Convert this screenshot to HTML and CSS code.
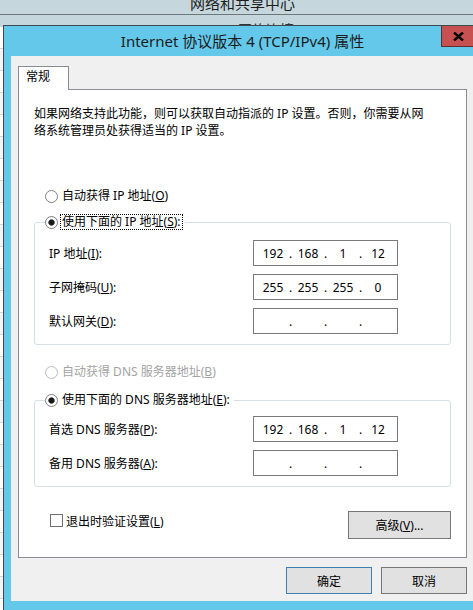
FILE: index.html
```html
<!DOCTYPE html>
<html lang="zh-CN">
<head>
<meta charset="utf-8">
<title>Internet 协议版本 4 (TCP/IPv4) 属性</title>
<link rel="stylesheet" href="styles.css">
</head>
<body>
<div class="desktop">
  <div class="bgwin">
    <div class="bg-title"><span>网络和共享中心</span></div>
    <div class="bg-crumb"><span>网络连接</span></div>
    <div class="bg-list">
      <div class="bg-row"></div><div class="bg-row alt"></div><div class="bg-row"></div><div class="bg-row alt"></div>
      <div class="bg-row"></div><div class="bg-row alt"></div><div class="bg-row"></div><div class="bg-row alt"></div>
      <div class="bg-row"></div><div class="bg-row alt"></div><div class="bg-row"></div><div class="bg-row alt"></div>
      <div class="bg-row"></div><div class="bg-row alt"></div><div class="bg-row"></div><div class="bg-row alt"></div>
      <div class="bg-row"></div><div class="bg-row alt"></div><div class="bg-row"></div><div class="bg-row alt"></div>
      <div class="bg-row"></div><div class="bg-row alt"></div><div class="bg-row"></div><div class="bg-row alt"></div>
      <div class="bg-row"></div><div class="bg-row alt"></div><div class="bg-row"></div>
    </div>
  </div>

  <div class="dialog">
    <div class="titlebar">
      <span class="title">Internet 协议版本 4 (TCP/IPv4) 属性</span>
      <div class="close">
        <svg width="11" height="9" viewBox="0 0 11 9"><path d="M1 0.5 L10 8.5 M10 0.5 L1 8.5" stroke="#000" stroke-width="2.4" fill="none"/></svg>
      </div>
    </div>
    <div class="client">
      <div class="tabs"><div class="tab">常规</div></div>
      <div class="panel">
        <p class="desc">如果网络支持此功能，则可以获取自动指派的 IP 设置。否则，你需要从网<br>络系统管理员处获得适当的 IP 设置。</p>

        <div class="opt first"><span class="radio"></span><span class="lbl">自动获得 IP 地址(<u>O</u>)</span></div>

        <fieldset class="group g1">
          <legend><div class="opt"><span class="radio on"></span><span class="lbl focus">使用下面的 IP 地址(<u>S</u>):</span></div></legend>
          <div class="fields">
            <div class="flabel">IP 地址(<u>I</u>):</div>
            <div class="ip"><span>192</span><i>.</i><span>168</span><i>.</i><span>1</span><i>.</i><span>12</span></div>
            <div class="flabel">子网掩码(<u>U</u>):</div>
            <div class="ip"><span>255</span><i>.</i><span>255</span><i>.</i><span>255</span><i>.</i><span>0</span></div>
            <div class="flabel">默认网关(<u>D</u>):</div>
            <div class="ip"><span></span><i>.</i><span></span><i>.</i><span></span><i>.</i><span></span></div>
          </div>
        </fieldset>

        <div class="opt disabled"><span class="radio"></span><span class="lbl">自动获得 DNS 服务器地址(<u>B</u>)</span></div>

        <fieldset class="group g2">
          <legend><div class="opt"><span class="radio on"></span><span class="lbl">使用下面的 DNS 服务器地址(<u>E</u>):</span></div></legend>
          <div class="fields">
            <div class="flabel">首选 DNS 服务器(<u>P</u>):</div>
            <div class="ip"><span>192</span><i>.</i><span>168</span><i>.</i><span>1</span><i>.</i><span>12</span></div>
            <div class="flabel">备用 DNS 服务器(<u>A</u>):</div>
            <div class="ip"><span></span><i>.</i><span></span><i>.</i><span></span><i>.</i><span></span></div>
          </div>
        </fieldset>

        <div class="bottom">
          <div class="check"><span class="box"></span><span>退出时验证设置(<u>L</u>)</span></div>
          <button class="btn adv">高级(<u>V</u>)...</button>
        </div>
      </div>
      <div class="buttons">
        <button class="btn dlg default">确定</button>
        <button class="btn dlg">取消</button>
      </div>
    </div>
  </div>
</div>
</body>
</html>
```

FILE: styles.css
```css
* { box-sizing: border-box; }
html, body { margin: 0; padding: 0; }
body {
  width: 473px;
  height: 610px;
  overflow: hidden;
  font-family: "Noto Sans", "Noto Sans CJK SC", sans-serif;
  font-size: 12px;
  color: #000;
  background: #fff;
}
.desktop { position: relative; width: 473px; height: 610px; overflow: hidden; }

/* background window */
.bg-title {
  height: 15px;
  background: #c5d6dc;
  border-bottom: 1px solid #6e787c;
  text-align: center;
  overflow: hidden;
  font-size: 15px;
  color: #1e1e1e;
}
.bg-title span { display: block; margin-top: -7px; line-height: 20px; padding-left: 12px; }
.bg-crumb {
  height: 12px;
  background: #c5d6dc;
  overflow: hidden;
  font-size: 14px;
  color: #333;
  padding-left: 238px;
}
.bg-crumb span { display: block; margin-top: 5px; line-height: 20px; }
.bg-list { background: #fff; }
.bg-row { height: 22px; border-bottom: 1px solid #d6d6d6; }
.bg-row.alt { background: #f4f4f4; }

/* dialog window */
.dialog {
  position: absolute;
  left: 3px;
  top: 25px;
  width: 479px;
  height: 590px;
  background: #64c8eb;
  border: 1px solid #3d4a50;
}
.titlebar {
  position: relative;
  height: 30px;
  text-align: center;
  font-size: 15px;
  line-height: 30px;
  color: #1c1c1c;
}
.close {
  position: absolute;
  top: 0;
  right: 6px;
  width: 34px;
  height: 21px;
  background: #c75050;
  border: 1px solid #5e2f2f;
  border-top: none;
  display: flex;
  align-items: center;
  justify-content: center;
}
.close svg { display: block; }
.client {
  margin: 0 7px;
  height: 545px;
  background: #f0f0f0;
  padding: 10px 7px 0;
}

/* tab */
.tabs { display: flex; height: 23px; }
.tab {
  position: relative;
  z-index: 1;
  width: 51px;
  height: 24px;
  border: 1px solid #898c95;
  border-bottom: none;
  background: #fff;
  padding-left: 7px;
  line-height: 20px;
}
.panel {
  height: 469px;
  border: 1px solid #898c95;
  background: #fff;
  padding: 0 15px;
}
.desc { margin: 15px 0 0; line-height: 17px; }

/* radio options */
.opt { display: flex; align-items: center; height: 16px; padding-left: 11px; white-space: nowrap; }
.opt.first { margin-top: 49px; }
legend .opt { padding-left: 0; }
.radio {
  flex: none;
  width: 13px;
  height: 13px;
  border-radius: 50%;
  border: 1px solid #7f7f7f;
  background: #fff;
  margin-right: 2px;
}
.radio.on { background: radial-gradient(circle, #1a1a1a 0 2.5px, #6a6a6a 3px, #fff 3.6px); }
.lbl { border: 1px dotted transparent; padding: 0 1px; line-height: 14px; }
.lbl.focus { border-color: #000; }
.opt.disabled { margin-top: 19px; color: #a3a3a3; }
.opt.disabled .radio { border-color: #bcbcbc; }

/* group boxes */
.group {
  margin: 0;
  padding: 0;
  min-width: 0;
  border: 1px solid #d5dfe5;
  border-radius: 3px;
}
.group legend { margin-left: 10px; padding: 0 2px 0 0; }
.g1 { margin-top: 10px; }
.g2 { margin-top: 12px; }
.fields {
  display: grid;
  grid-template-columns: 204px 145px;
  row-gap: 8px;
  align-items: center;
  padding: 10px 0 10px 14px;
}
.g2 .fields { padding-top: 8px; }
.flabel { white-space: nowrap; }
.ip {
  display: flex;
  align-items: center;
  height: 26px;
  width: 145px;
  border: 1px solid #7a7a7a;
  background: #fff;
  padding-left: 4px;
}
.ip span { width: 30px; text-align: center; }
.ip i { font-style: normal; width: 5px; text-align: center; }

/* bottom */
.bottom {
  display: flex;
  justify-content: space-between;
  align-items: flex-start;
  margin-top: 24px;
  padding-left: 16px;
}
.check { display: flex; align-items: center; gap: 3px; height: 17px; margin-top: 1px; }
.box { width: 13px; height: 13px; border: 1px solid #6f6f6f; background: #fff; flex: none; }

.btn {
  font: inherit;
  color: #000;
  background: #e1e1e1;
  border: 1px solid #777;
  padding: 0;
  margin: 0;
}
.btn.adv { width: 103px; height: 28px; }
.buttons { display: flex; justify-content: flex-end; gap: 9px; margin-top: 9px; }
.btn.dlg { width: 86px; height: 27px; }
.btn.default { border-color: #3c7fb1; }
```
